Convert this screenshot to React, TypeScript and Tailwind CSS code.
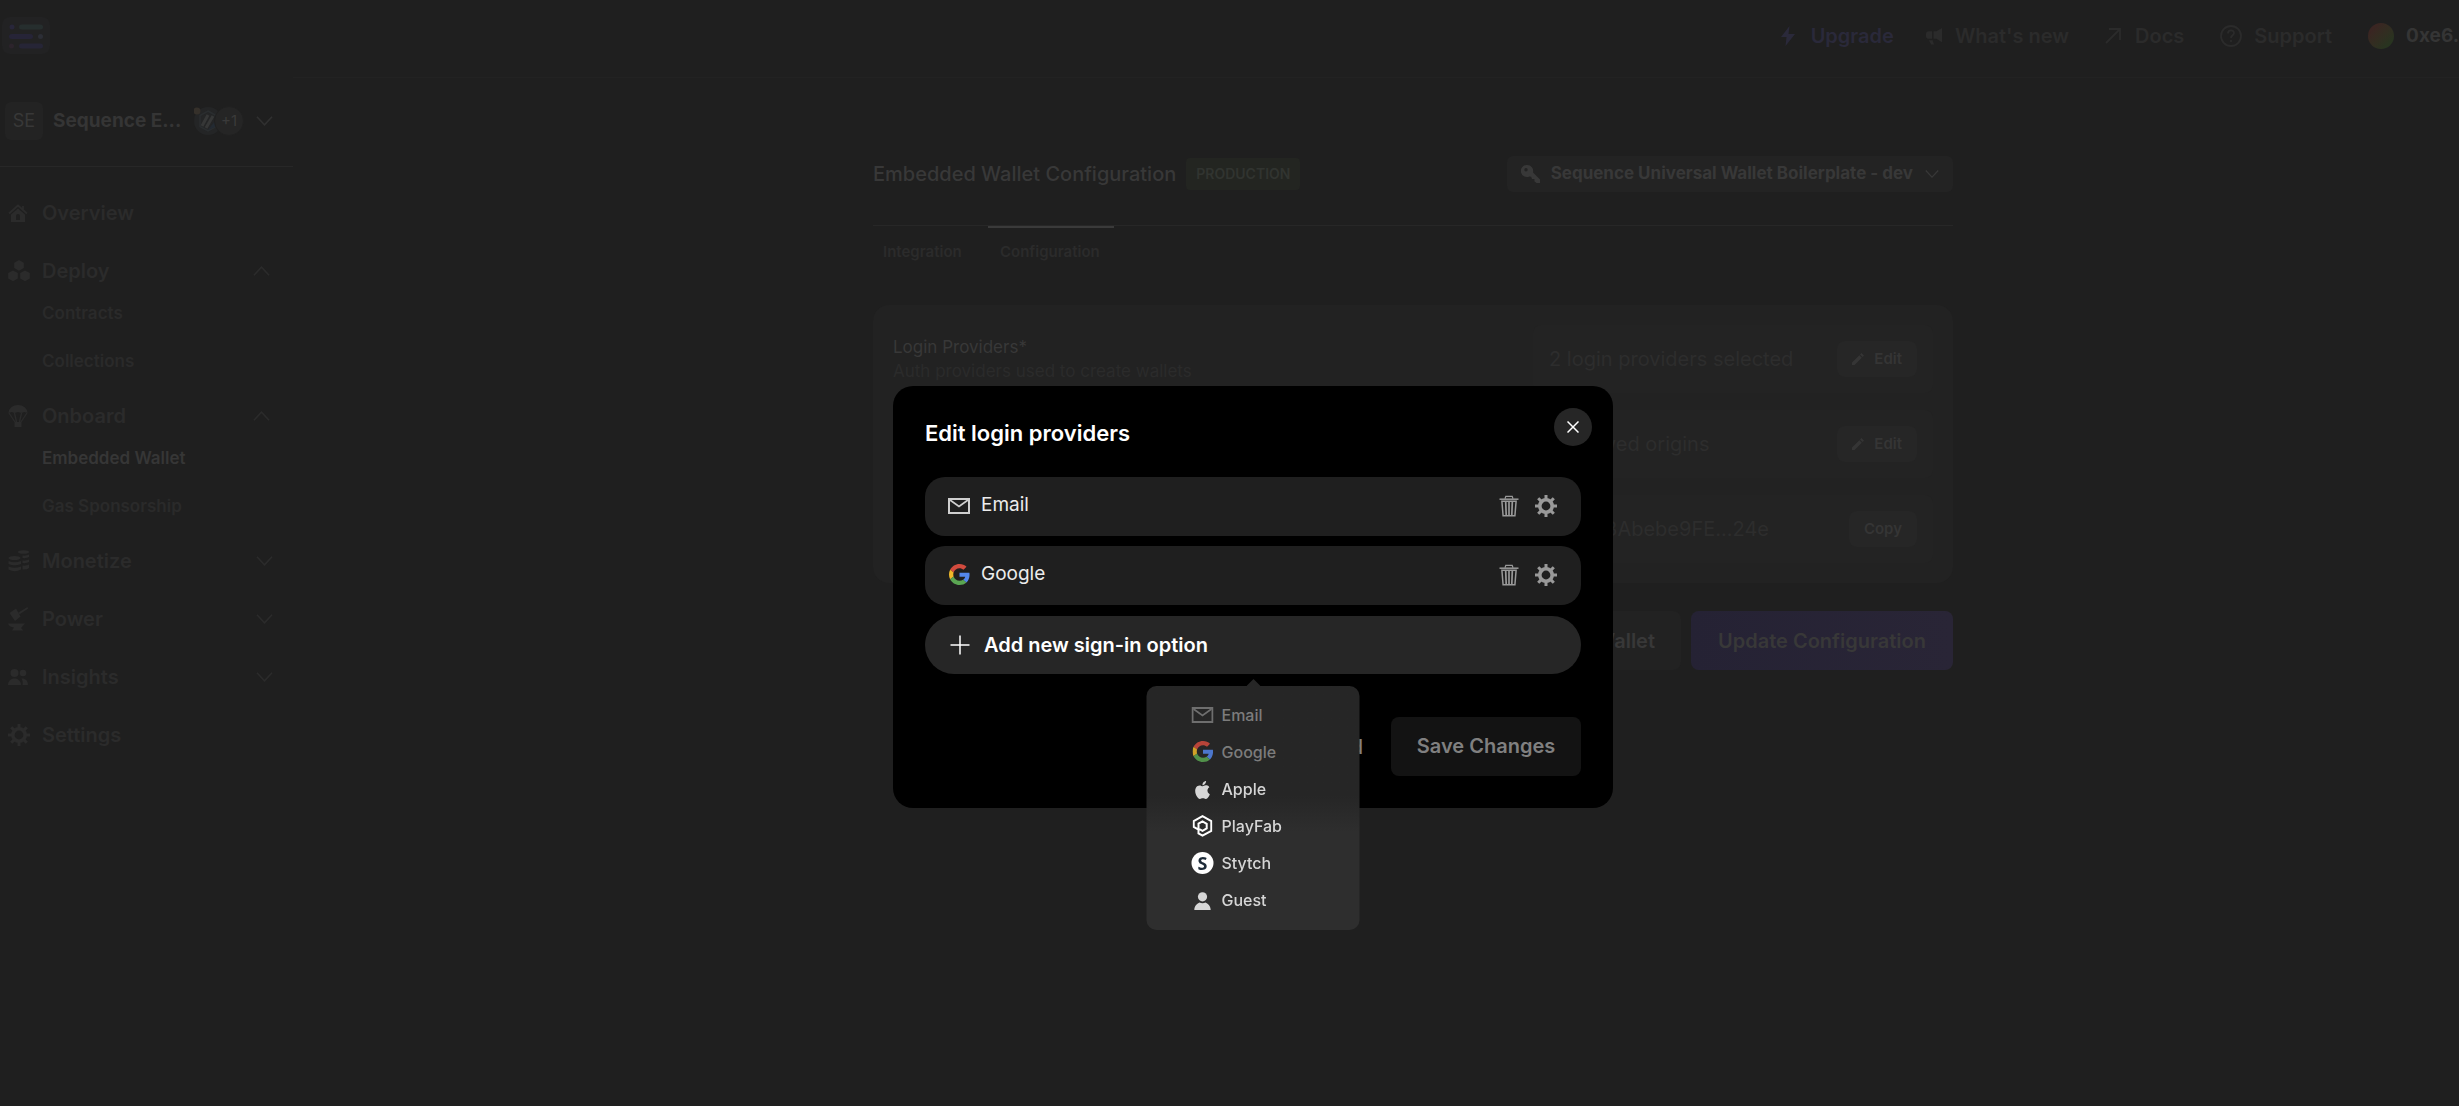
import React from 'react';

const Chevron: React.FC<{ up?: boolean; className?: string }> = ({ up, className = 'w-[17px]' }) => (
  <svg viewBox="0 0 18 12" fill="none" stroke="currentColor" strokeWidth="1.6" className={`h-3 shrink-0 ${className}`}>
    <path d={up ? 'M1 10.5 9 2l8 8.5' : 'M1 1.5 9 10l8-8.5'} />
  </svg>
);

const MailIcon = () => (
  <svg viewBox="0 0 22 16" fill="none" stroke="currentColor" className="h-4 w-[22px]">
    <path d="M1 1h20v14H1z" strokeWidth="2" />
    <path d="m2 2 9 6.5L20 2" strokeWidth="1.7" />
  </svg>
);

const GoogleIcon = () => (
  <svg viewBox="0 0 48 48" className="h-[21px] w-[21px]">
    <path fill="#d24b3e" d="M24 9.5c3.54 0 6.71 1.22 9.21 3.6l6.85-6.85C35.9 2.38 30.47 0 24 0 14.62 0 6.51 5.38 2.56 13.22l7.98 6.19C12.43 13.72 17.74 9.5 24 9.5z" />
    <path fill="#5487ec" d="M46.98 24.55c0-1.57-.15-3.09-.38-4.55H24v9.02h12.94c-.58 2.96-2.26 5.48-4.78 7.18l7.73 6c4.51-4.18 7.09-10.36 7.09-17.65z" />
    <path fill="#efb92a" d="M10.53 28.59c-.48-1.45-.76-2.99-.76-4.59s.27-3.14.76-4.59l-7.98-6.19C.92 16.46 0 20.12 0 24c0 3.88.92 7.54 2.56 10.78l7.97-6.19z" />
    <path fill="#5aa552" d="M24 48c6.48 0 11.93-2.13 15.89-5.81l-7.73-6c-2.15 1.45-4.92 2.3-8.16 2.3-6.26 0-11.57-4.22-13.47-9.91l-7.98 6.19C6.51 42.62 14.62 48 24 48z" />
  </svg>
);

const AppleIcon = () => (
  <svg viewBox="0 0 24 24" fill="currentColor" className="mt-0.5 h-[18px] w-[18px]">
    <path d="M12.152 6.896c-.948 0-2.415-1.078-3.96-1.04-2.04.027-3.91 1.183-4.961 3.014-2.117 3.675-.546 9.103 1.519 12.09 1.013 1.454 2.208 3.09 3.792 3.039 1.52-.065 2.09-.987 3.935-.987 1.831 0 2.35.987 3.96.948 1.637-.026 2.676-1.48 3.676-2.948 1.156-1.688 1.636-3.325 1.662-3.415-.039-.013-3.182-1.221-3.22-4.857-.026-3.04 2.48-4.494 2.597-4.559-1.429-2.09-3.623-2.324-4.39-2.376-2-.156-3.675 1.09-4.61 1.09zM15.53 3.83c.843-1.012 1.4-2.427 1.245-3.83-1.207.052-2.662.805-3.532 1.818-.78.896-1.454 2.338-1.273 3.714 1.338.104 2.715-.688 3.559-1.701" />
  </svg>
);

const PlayFabIcon = () => (
  <svg viewBox="0 0 20 22" fill="none" stroke="#fff" strokeWidth="2" className="h-[22px] w-5">
    <path d="M6 14.6 1.2 12V6.2L10 1.2l8.8 5v9.6L10 20.6l-4-2.3V8.7L10 6.4l4.2 2.4v4.6L10 15.8l-4-2.2" />
  </svg>
);

const StytchIcon = () => (
  <span className="flex size-[22px] items-center justify-center rounded-full bg-white font-['Noto_Sans',sans-serif] text-lg leading-none font-bold text-[#1d2b38]">
    S
  </span>
);

const GuestIcon = () => (
  <svg viewBox="0 0 18 18" fill="currentColor" className="mt-0.5 h-[18px] w-[18px]">
    <circle cx="9" cy="4.8" r="4.6" />
    <path d="M.8 18c0-4 3-6.6 5.2-7.4 1.8 1 4.2 1 6 0 2.2.8 5.2 3.4 5.2 7.4z" />
  </svg>
);

const TrashIcon = () => (
  <svg viewBox="0 0 20 22" fill="none" stroke="currentColor" className="h-[22px] w-5">
    <path d="M.5 4.2h19" strokeWidth="1.5" />
    <path d="M6 3.8 6.8 1.3h6.4L14 3.8" strokeWidth="1.2" />
    <path d="m2.9 6.3 1.2 14.4h11.8l1.2-14.4z" strokeWidth="1.5" />
    <path d="m6.7 7 .5 13M10 7v13M13.3 7l-.5 13" strokeWidth="1.7" />
  </svg>
);

const GearIcon = () => (
  <svg viewBox="0 0 22 22" fill="none" stroke="currentColor" className="size-[22px]">
    <circle cx="11" cy="11" r="6.2" strokeWidth="3.6" />
    <path d="M11 0v4M11 18v4M0 11h4M18 11h4M3.2 3.2l2.9 2.9M15.9 15.9l2.9 2.9M18.8 3.2l-2.9 2.9M6.1 15.9l-2.9 2.9" strokeWidth="3" />
  </svg>
);

const HomeIcon = () => (
  <svg viewBox="0 0 20 18" className="h-[18px] w-5">
    <path d="M1 9.5 10 1.5l9 8M15 2v4" fill="none" stroke="currentColor" strokeWidth="1.8" />
    <path fill="currentColor" fillRule="evenodd" d="M3 10.5 10 4.5l7 6V18H3zM8 16h4v-4a2 2 0 0 0-4 0z" />
  </svg>
);

const DeployIcon = () => (
  <svg viewBox="0 0 22 22" fill="currentColor" className="size-[22px]">
    <path d="M11 0l4.8 2.7v5.4L11 10.8 6.2 8.1V2.7zM5 10.4l4.8 2.7v5.4L5 21.2.2 18.500v-5.400zM17 10.400l4.800 2.700v5.400L17 21.200l-4.800-2.700v-5.400z" />
  </svg>
);

const ParachuteIcon = () => (
  <svg viewBox="0 0 20 22" className="h-[22px] w-5">
    <path fill="currentColor" d="M.5 8a9.5 8 0 0 1 19 0l-3.2-1-3 1L10 7 6.7 8l-3-1z" />
    <path fill="none" stroke="currentColor" strokeWidth="1.3" d="m1 8 6 9M19 8l-6 9M6.5 8l2 9M13.5 8l-2 9" />
    <path fill="currentColor" d="M6.5 17h7v5h-7z" />
  </svg>
);

const CoinsIcon = () => (
  <svg viewBox="0 0 22 22" fill="currentColor" className="size-[22px]">
    <ellipse cx="6.5" cy="8" rx="6" ry="2" />
    <ellipse cx="15.5" cy="2" rx="5.5" ry="1.8" />
    <path d="M.5 11q6 2.5 12.5 0v3q-6.5 2.5-12.5 0zM.5 16.5q6 2.5 12.5 0v3q-6.5 3.5-12.5 0zM14.5 5.5q4 .5 6.5-1V7q-2.5 1.5-6.5 1zM14.5 10.5q4 .5 6.5-1V12q-2.5 1.5-6.5 1zM14.5 15.5q4 .5 6.5-1V18q-2.5 2-6.5 1.5z" />
  </svg>
);

const AnvilIcon = () => (
  <svg viewBox="0 0 20 24" fill="currentColor" className="h-6 w-5">
    <path d="m1.5 6 6.5-4.500 4.500 8L7 14zM10.5 5.500 19.500 0l.5 1.800-8.500 5.400zM0 16.500h17l-4 4.500 2.500 2.500H4L6 20.500Q1 20 0 16.500z" />
  </svg>
);

const PeopleIcon = () => (
  <svg viewBox="0 0 20 16" fill="currentColor" className="h-4 w-5">
    <circle cx="6.5" cy="4" r="4" />
    <circle cx="15" cy="4" r="3.3" />
    <path d="M0 16c0-4 3-6.500 6.500-6.500S13 12 13 16zM14.500 16H20c0-4-2-6.500-6.500-6.500 1 1.500 1.500 3.500 1 6.500z" />
  </svg>
);

const PencilIcon = () => (
  <svg viewBox="0 0 14 14" fill="currentColor" className="size-3">
    <path d="M0 14v-3L8.500 2.600l2.900 2.900L3 14zM9.400 1.700 11 0l3 3-1.700 1.600z" />
  </svg>
);

const KeyIcon = () => (
  <svg viewBox="0 0 20 20" fill="currentColor" className="size-5">
    <path fillRule="evenodd" d="M6.200 1a6 6 0 1 0 2.200 11.400l1.800.4.800 2.200h2.400v2.200L15.600 19H19v-3.600L12 8.500A6 6 0 0 0 6.200 1zM5 4a1.700 1.700 0 1 1 0 3.400A1.700 1.700 0 0 1 5 4z" />
  </svg>
);

interface NavGroupProps {
  label: string;
  icon: React.ReactNode;
  open?: boolean;
  chevron?: boolean;
  items?: { label: string; active?: boolean }[];
}

const NavGroup: React.FC<NavGroupProps> = ({ label, icon, open, chevron = true, items }) => (
  <li>
    <button className="flex h-[58px] w-full items-center text-xl font-semibold text-[#2b2b2b]">
      <span className="flex w-9 items-center justify-start pl-0.5">{icon}</span>
      <span className="flex-1 text-left">{label}</span>
      {chevron && <Chevron up={open} className={open ? 'mr-[3px] w-[17px]' : 'w-[17px]'} />}
    </button>
    {items && (
      <ul className="-mt-2.5 pb-px pl-9">
        {items.map((item) => (
          <li key={item.label}>
            <a href="#" className={`flex h-12 items-center text-[17px] font-semibold ${item.active ? 'text-[#363636]' : 'text-[#2a2a2a]'}`}>
              {item.label}
            </a>
          </li>
        ))}
      </ul>
    )}
  </li>
);

const Sidebar: React.FC = () => (
  <aside className="w-[293px] shrink-0">
    <div className="flex h-[90px] items-center border-b border-[#272727] pr-5 pb-px pl-[5px]">
      <span className="flex size-[38px] items-center justify-center rounded-md bg-[#232323] text-lg text-[#383838]">SE</span>
      <span className="ml-2.5 flex-1 text-[19px] font-bold text-[#353535]">Sequence E...</span>
      <span className="flex size-7 items-center justify-center rounded-full bg-[#242526]">
        <svg viewBox="0 0 28 28" fill="none" className="size-7">
          <circle cx="3" cy="4" r="3.5" fill="#35302a" />
          <path d="m14 4 8 4.500v11L14 24l-8-4.500v-11z" stroke="#2a2d2f" strokeWidth="1.5" />
          <path d="m8 19 6-11M12 21l7-12" stroke="#363737" strokeWidth="3" />
          <path d="m14 23 7-9v6z" fill="#232a32" />
        </svg>
      </span>
      <span className="-ml-2 flex size-[30px] items-center justify-center rounded-full border border-[#202020] bg-[#252525] text-[15px] text-[#3a3a3a]">+1</span>
      <Chevron className="ml-3 w-[17px] text-[#303030]" />
    </div>
    <nav className="pt-[17px] pr-5 pl-1.5">
      <ul>
        <NavGroup label="Overview" icon={<HomeIcon />} chevron={false} />
        <NavGroup label="Deploy" icon={<DeployIcon />} open items={[{ label: 'Contracts' }, { label: 'Collections' }]} />
        <NavGroup label="Onboard" icon={<ParachuteIcon />} open items={[{ label: 'Embedded Wallet', active: true }, { label: 'Gas Sponsorship' }]} />
        <NavGroup label="Monetize" icon={<CoinsIcon />} />
        <NavGroup label="Power" icon={<AnvilIcon />} />
        <NavGroup label="Insights" icon={<PeopleIcon />} />
        <NavGroup label="Settings" icon={<GearIcon />} chevron={false} />
      </ul>
    </nav>
  </aside>
);

const TopBar: React.FC = () => (
  <header className="flex h-[77px] items-start justify-between">
    <a href="#" aria-label="Home" className="mt-[17px] ml-0.5 flex h-[37px] w-12 items-center justify-center rounded-lg bg-[#222223]">
      <svg viewBox="0 0 34 26" className="h-[26px] w-[34px]">
        <circle cx="3" cy="4" r="2.5" fill="#28263a" />
        <rect x="10" y="1.5" width="24" height="5" rx="2.5" fill="#262e2e" />
        <rect x="0" y="11" width="24" height="5" rx="2.5" fill="#262437" />
        <circle cx="31.5" cy="13.5" r="2.5" fill="#2c2e36" />
        <circle cx="2.5" cy="23" r="2.5" fill="#2c242c" />
        <rect x="10" y="20.5" width="24" height="5" rx="2.5" fill="#262536" />
      </svg>
    </a>
    <nav className="mt-4 flex h-10 items-center text-xl font-semibold whitespace-nowrap text-[#2b2b2b]">
      <a href="#" className="mr-8 flex items-center text-[#2a293a]">
        <svg viewBox="0 0 14 20" fill="currentColor" className="mr-4 h-5 w-3.5"><path d="M8.500 0 0 11h5.500L4.500 20 14 8H7.500z" /></svg>
        Upgrade
      </a>
      <a href="#" className="mr-9 flex items-center">
        <svg viewBox="0 0 18 18" fill="currentColor" className="mr-3 size-[17px]"><path d="M17 0v15l-6-3.500H8v-8h3zM6.500 3.500v8H3A3 3 0 0 1 0 8.500v-2a3 3 0 0 1 3-3zM3 13h4l1.500 4.500h-3z" /></svg>
        What's new
      </a>
      <a href="#" className="mr-9 flex items-center">
        <svg viewBox="0 0 16 16" fill="none" stroke="currentColor" strokeWidth="1.8" className="mr-3.5 size-4"><path d="M1 15 15 1M4 1h11v11" /></svg>
        Docs
      </a>
      <a href="#" className="mr-9 flex items-center">
        <svg viewBox="0 0 22 22" fill="none" stroke="currentColor" strokeWidth="1.8" className="mr-3 size-[22px]"><circle cx="11" cy="11" r="10" /><path d="M8 8.500c0-4 6-4 6-.5 0 2.500-3 2-3 5M11 15v2" /></svg>
        Support
      </a>
      <button className="flex items-center text-[19px] font-bold text-[#353535]">
        <span className="mr-3 size-[26px] rounded-full bg-linear-to-br from-[#3a2522] from-20% to-[#283420] to-80%" />
        0xe6.
      </button>
    </nav>
  </header>
);

const SettingRow: React.FC<{ text: string; action: string }> = ({ text, action }) => (
  <div className="flex h-17 items-center justify-between rounded-lg bg-[#232323] px-4">
    <span className="text-xl text-[#2d2d2d]">{text}</span>
    <button className="flex h-9 items-center gap-2.5 rounded-lg bg-[#262626] px-[15px] text-[15px] font-semibold text-[#353535]">
      {action === 'Edit' && <PencilIcon />}
      {action}
    </button>
  </div>
);

const ConfigurationPage: React.FC = () => (
  <main className="flex flex-1 justify-center border-t border-[#222222] pt-[78px] pl-[74px] text-[#383838]">
    <div className="w-[1080px]">
      <div className="flex h-9 items-center">
        <h1 className="text-xl font-medium">Embedded Wallet Configuration</h1>
        <span className="ml-2.5 flex h-8 items-center rounded bg-[#232521] px-2.5 text-sm font-semibold text-[#313430]">PRODUCTION</span>
        <button className="ml-auto flex h-9 items-center rounded-md bg-[#232323] px-3.5 text-[17px] font-bold">
          <KeyIcon />
          <span className="mr-3 ml-2.5">Sequence Universal Wallet Boilerplate - dev</span>
          <Chevron className="w-3.5" />
        </button>
      </div>
      <div role="tablist" className="mt-[33px] flex border-t border-[#272727] text-[15px] leading-5 font-semibold text-[#2b2b2b]">
        <button role="tab" className="w-[115px] border-t-2 border-transparent px-2.5 pt-3.5 text-left">Integration</button>
        <button role="tab" aria-selected className="w-[126px] border-t-2 border-[#3a3a3a] px-3 pt-3.5 text-left">Configuration</button>
      </div>
      <section className="mt-[43px] flex justify-between rounded-2xl bg-[#222222] p-5">
        <div className="pt-2.5">
          <h2 className="text-[17px] leading-6">Login Providers*</h2>
          <p className="text-[17px] leading-6 text-[#2b2b2b]">Auth providers used to create wallets</p>
        </div>
        <div className="flex w-[400px] flex-col gap-[17px]">
          <SettingRow text="2 login providers selected" action="Edit" />
          <SettingRow text="0 allowed origins" action="Edit" />
          <SettingRow text="0x1253Abebe9FE...24e" action="Copy" />
        </div>
      </section>
      <div className="mt-7 flex justify-end gap-2.5 text-xl font-semibold">
        <button className="h-[59px] rounded-lg bg-[#222222] px-[26px]">Test Embedded Wallet</button>
        <button className="h-[59px] w-[262px] rounded-lg bg-linear-to-r from-[#252234] to-[#292536]">Update Configuration</button>
      </div>
    </div>
  </main>
);

const ProviderRow: React.FC<{ name: string; icon: React.ReactNode }> = ({ name, icon }) => (
  <li className="flex h-[59px] items-center rounded-[20px] bg-[#1f1f1f] pr-6 pb-0.5 pl-[23px] text-[#ececec]">
    <span className="flex w-[22px] justify-center text-[#cfcfcf]">{icon}</span>
    <span className="ml-[11px] flex-1 text-[19px]">{name}</span>
    <span className="flex gap-4 text-[#999]">
      <button aria-label={`Delete ${name}`}><TrashIcon /></button>
      <button aria-label={`${name} settings`}><GearIcon /></button>
    </span>
  </li>
);

const signInOptions = [
  { name: 'Email', icon: <MailIcon />, disabled: true },
  { name: 'Google', icon: <GoogleIcon />, disabled: true },
  { name: 'Apple', icon: <AppleIcon />, disabled: false },
  { name: 'PlayFab', icon: <PlayFabIcon />, disabled: false },
  { name: 'Stytch', icon: <StytchIcon />, disabled: false },
  { name: 'Guest', icon: <GuestIcon />, disabled: false },
];

const SignInMenu: React.FC = () => (
  <div className="absolute top-full left-1/2 mt-3 w-[213px] -translate-x-1/2">
    <svg viewBox="0 0 14 7" className="absolute bottom-full left-1/2 h-[7px] w-3.5 -translate-x-1/2" fill="#262626">
      <path d="M0 7 7 0l7 7z" />
    </svg>
    <div role="menu" className="rounded-[10px] bg-linear-to-b from-[#262626] from-45% to-[#2e2e2e] to-60% pt-2.5 pb-3 pl-[45px]">
      {signInOptions.map((option) => (
        <button
          key={option.name}
          role="menuitem"
          disabled={option.disabled}
          className="flex h-[37px] w-full items-center gap-2 text-base font-medium text-[#d6d6d6] disabled:text-[#7c7c7c]"
        >
          <span className={`flex w-[22px] justify-center ${option.disabled ? 'opacity-85' : ''}`}>{option.icon}</span>
          {option.name}
        </button>
      ))}
    </div>
  </div>
);

const LoginProvidersDialog: React.FC = () => (
  <div className="fixed inset-0 flex items-start justify-center pt-[386px] pl-[47px]">
    <div role="dialog" aria-labelledby="dialog-title" className="relative w-[720px] rounded-[20px] bg-black p-8">
      <button aria-label="Close" className="absolute top-[22px] right-[21px] flex size-[38px] items-center justify-center rounded-full bg-[#262626] text-white">
        <svg viewBox="0 0 12 12" fill="none" stroke="currentColor" strokeWidth="1.5" className="size-3"><path d="m.5.5 11 11M11.500.5l-11 11" /></svg>
      </button>
      <h2 id="dialog-title" className="text-[22px] leading-[31px] font-semibold text-white">Edit login providers</h2>
      <ul className="mt-7 flex flex-col gap-2.5">
        <ProviderRow name="Email" icon={<MailIcon />} />
        <ProviderRow name="Google" icon={<GoogleIcon />} />
      </ul>
      <div className="relative z-10 mt-[11px]">
        <button className="flex h-[58px] w-full items-center rounded-[29px] bg-[#262626] pl-[25px] text-xl font-semibold text-white">
          <svg viewBox="0 0 20 20" fill="none" stroke="currentColor" strokeWidth="1.5" className="mr-3.5 size-5"><path d="M10 .5v19M.5 10h19" /></svg>
          Add new sign-in option
        </button>
        <SignInMenu />
      </div>
      <div className="mt-[43px] flex justify-end gap-7 text-xl font-semibold">
        <button className="text-[#808080]">Discard</button>
        <button disabled className="h-[59px] w-[190px] rounded-lg bg-[#131313] pb-0.5 text-[#808080]">Save Changes</button>
      </div>
    </div>
  </div>
);

const App: React.FC = () => (
  <div className="flex min-h-screen flex-col bg-[#1f1f1f] font-['Inter','Liberation_Sans',sans-serif]">
    <TopBar />
    <div className="flex flex-1">
      <Sidebar />
      <ConfigurationPage />
    </div>
    <LoginProvidersDialog />
  </div>
);

export default App;
